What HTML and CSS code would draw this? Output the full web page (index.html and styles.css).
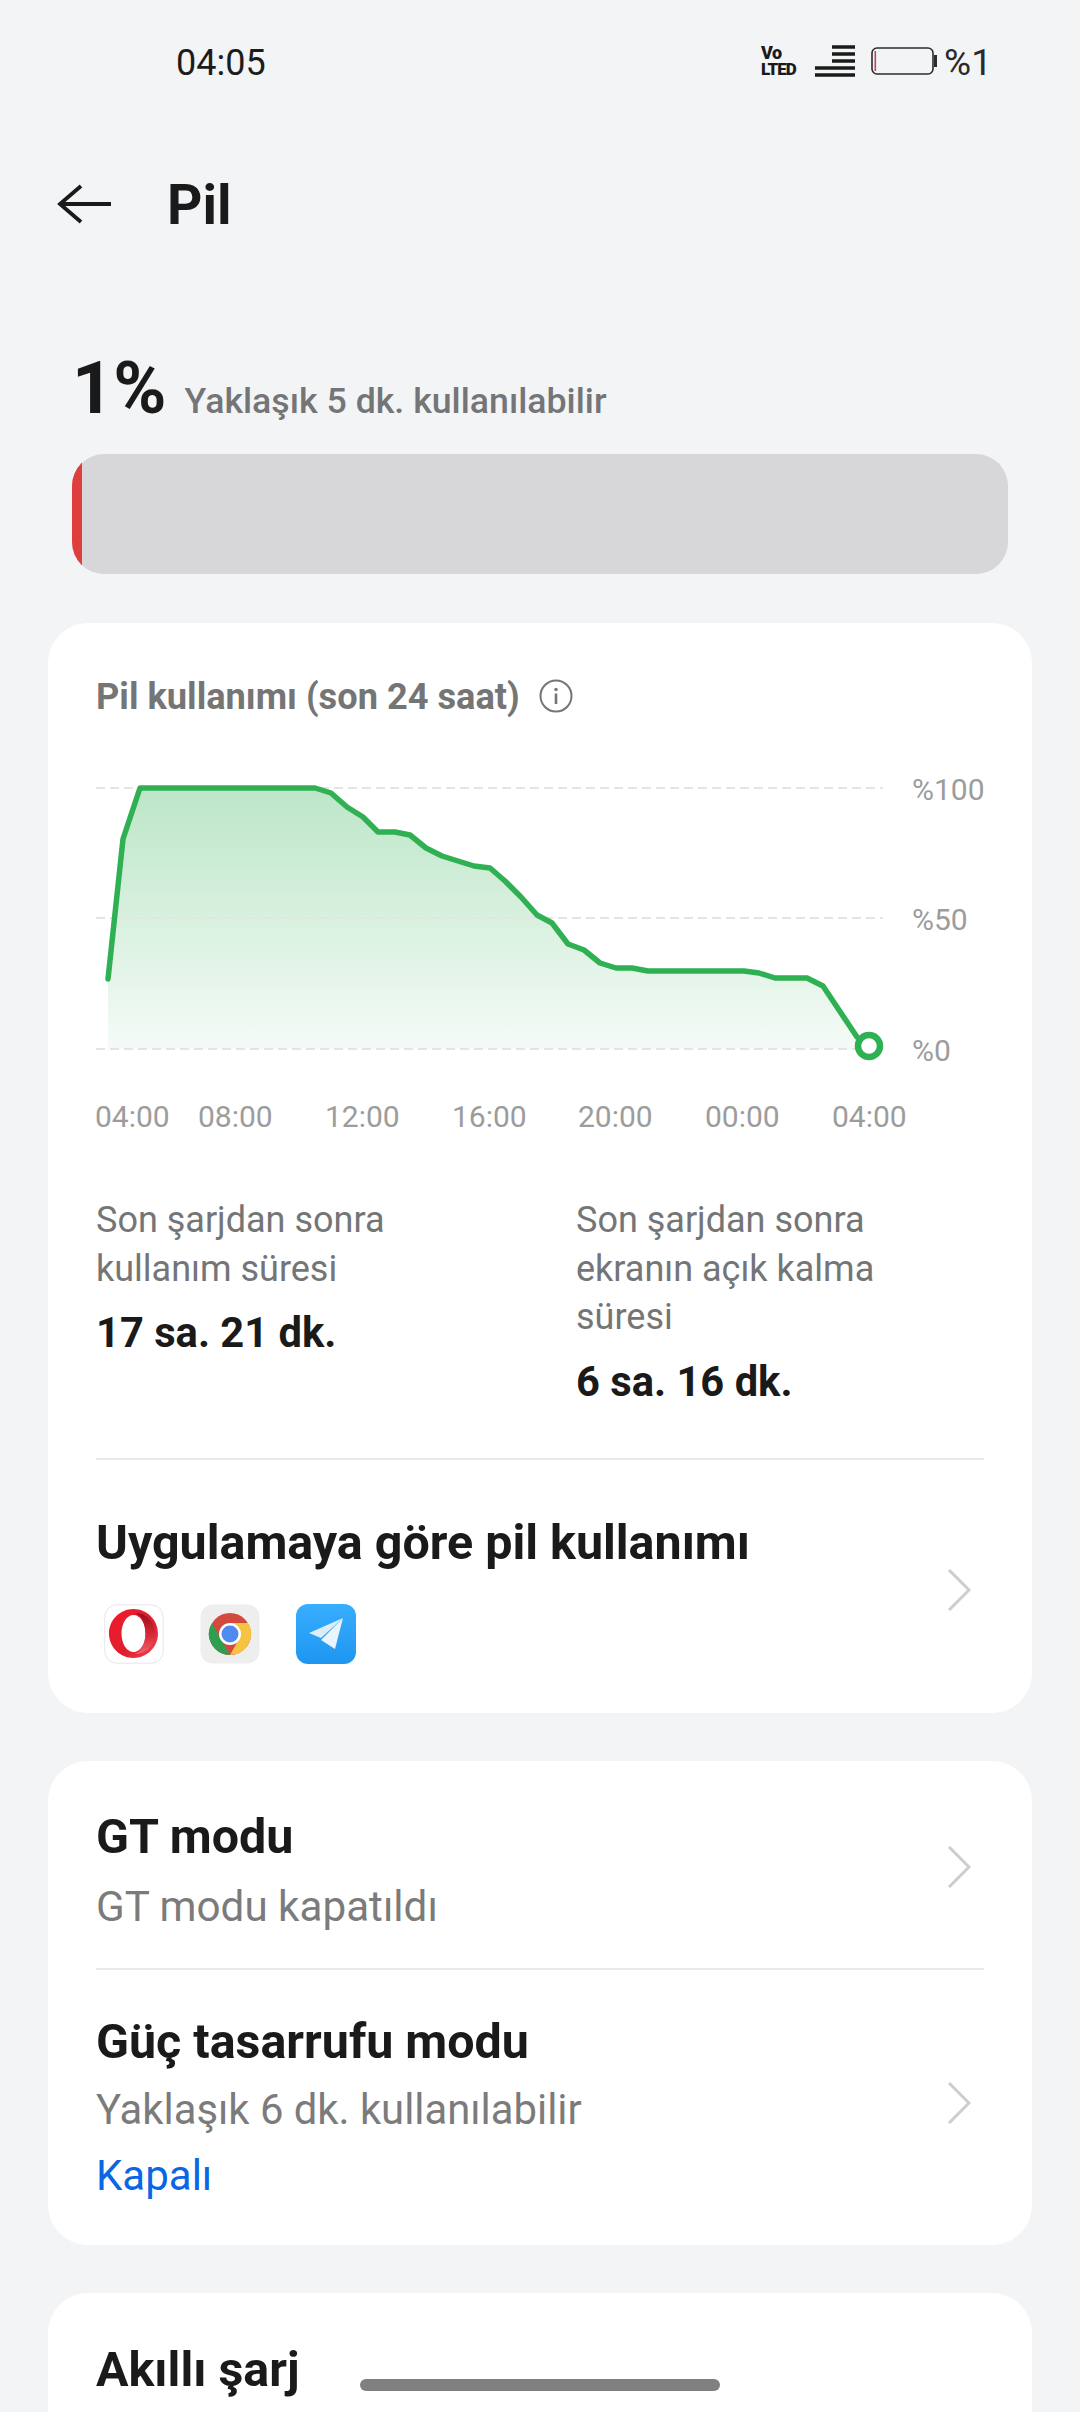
FILE: index.html
```html
<!DOCTYPE html>
<html lang="tr">
<head>
<meta charset="utf-8">
<title>Pil</title>
<link rel="stylesheet" href="styles.css">
</head>
<body>
<div class="page">
  <header class="status">
    <span class="clock">04:05</span>
    <div class="status-right">
      <div class="volte">
        <span class="volte-a">Vo</span>
        <span class="volte-b">LTED</span>
      </div>
      <svg class="signal" width="42" height="32" viewBox="0 0 42 32">
        <path d="M18 2H41M18 9H41M18 16H41M1 23H41M1 30H41" stroke="#1a1a1a" stroke-width="3.400" fill="none"/>
      </svg>
      <svg class="batt" width="67" height="30" viewBox="0 0 67 30">
        <rect x="1" y="1" width="61" height="26" rx="5" fill="none" stroke="#2b2b2b" stroke-width="1.600"/>
        <rect x="3.500" y="4" width="1.600" height="20" fill="#c0455a"/>
        <rect x="63" y="8" width="3" height="12" fill="#2b2b2b"/>
      </svg>
      <span class="pct">%1</span>
    </div>
  </header>

  <div class="appbar">
    <svg class="back" width="56" height="40" viewBox="0 0 56 40">
      <path d="M55 20H4M25 2L4 20L25 38" fill="none" stroke="#1a1a1a" stroke-width="3.800"/>
    </svg>
    <h1 class="title">Pil</h1>
  </div>

  <section class="level">
    <div class="level-row">
      <span class="level-num">1%</span>
      <span class="level-sub">Yaklaşık 5 dk. kullanılabilir</span>
    </div>
    <div class="bar"><div class="bar-fill"></div></div>
  </section>

  <section class="card card-usage">
    <div class="usage-head">
      <span class="usage-title">Pil kullanımı (son 24 saat)</span>
      <svg width="34" height="34" viewBox="0 0 34 34">
        <circle cx="17" cy="17" r="15.500" fill="none" stroke="#757575" stroke-width="2"/>
        <path d="M17 14.500V25" stroke="#757575" stroke-width="2.600"/>
        <circle cx="17" cy="10.500" r="1.700" fill="#757575"/>
      </svg>
    </div>

    <svg class="chart" width="984" height="380" viewBox="48 760 984 380">
      <defs>
        <linearGradient id="area" x1="0" y1="0" x2="0" y2="1">
          <stop offset="0" stop-color="#2fb052" stop-opacity=".32"/>
          <stop offset="1" stop-color="#2fb052" stop-opacity=".05"/>
        </linearGradient>
      </defs>
      <path d="M108 979L123 839L140 788L315 788L331 793L347 807L363 817L378 832L395 832L410 835L426 848L442 856L458 861L474 866L490 868L505 881L521 897L537 915L552 923L568 944L584 950L600 963L616 968L632 968L648 971L744 971L759 973L775 978L807 978L823 986L857 1037L869 1049L108 1049Z" fill="url(#area)"/>
      <path class="grid" d="M96 788H883M96 918H883M96 1049H883"/>
      <path class="line" d="M108 979L123 839L140 788L315 788L331 793L347 807L363 817L378 832L395 832L410 835L426 848L442 856L458 861L474 866L490 868L505 881L521 897L537 915L552 923L568 944L584 950L600 963L616 968L632 968L648 971L744 971L759 973L775 978L807 978L823 986L857 1037"/>
      <circle class="dot" cx="869" cy="1046" r="11"/>
      <text class="axis" x="912" y="800">%100</text>
      <text class="axis" x="912" y="930">%50</text>
      <text class="axis" x="912" y="1061">%0</text>
      <text class="axis" x="95" y="1127">04:00</text>
      <text class="axis" x="198" y="1127">08:00</text>
      <text class="axis" x="325" y="1127">12:00</text>
      <text class="axis" x="452" y="1127">16:00</text>
      <text class="axis" x="578" y="1127">20:00</text>
      <text class="axis" x="705" y="1127">00:00</text>
      <text class="axis" x="832" y="1127">04:00</text>
    </svg>

    <div class="stats">
      <div class="stat">
        <p class="stat-label">Son şarjdan sonra kullanım süresi</p>
        <p class="stat-value">17 sa. 21 dk.</p>
      </div>
      <div class="stat">
        <p class="stat-label">Son şarjdan sonra ekranın açık kalma süresi</p>
        <p class="stat-value">6 sa. 16 dk.</p>
      </div>
    </div>

    <div class="divider"></div>

    <div class="row row-apps">
      <div class="row-main">
        <div class="row-title">Uygulamaya göre pil kullanımı</div>
        <div class="apps">
          <svg class="app" width="60" height="60" viewBox="0 0 60 60">
            <defs>
              <linearGradient id="op" x1="0" y1="0" x2="1" y2="1">
                <stop offset="0" stop-color="#f01a2a"/>
                <stop offset=".6" stop-color="#de1f2e"/>
                <stop offset="1" stop-color="#ef4a55"/>
              </linearGradient>
              <linearGradient id="ops" x1="0" y1="0" x2="0" y2="1">
                <stop offset="0" stop-color="#9c0e1a"/>
                <stop offset=".55" stop-color="#d92a38"/>
                <stop offset="1" stop-color="#f0626c"/>
              </linearGradient>
            </defs>
            <rect x=".8" y=".8" width="58.400" height="58.400" rx="12" fill="#fff" stroke="#e6e6e6" stroke-width="1"/>
            <path fill-rule="evenodd" d="M29.500 5C43 5 54 16 54 29.500S43 54 29.500 54S5 43 5 29.500S16 5 29.500 5ZM29.500 11C23 11 17.500 19 17.500 29.500S23 48 29.500 48S41.500 40 41.500 29.500S36 11 29.500 11Z" fill="url(#op)"/>
            <path d="M31 9C37 11 41.500 19 41.500 29.500S37 48 31 50C43 50 51 41 51 29.500S43 9 31 9Z" fill="url(#ops)"/>
          </svg>
          <svg class="app" width="60" height="60" viewBox="0 0 60 60">
            <rect x=".5" y=".5" width="59" height="59" rx="12" fill="#eeeeee"/>
            <circle cx="30" cy="30" r="21" fill="#d24a3d"/>
            <path d="M12 19L22 37L30 51A21 21 0 0 1 12 19Z" fill="#2f9e4f"/>
            <path d="M30 19H48A21 21 0 0 1 30 51L39 35Z" fill="#f6c342"/>
            <circle cx="30" cy="30" r="11" fill="#fff"/>
            <circle cx="30" cy="30" r="8.500" fill="#4f8bee"/>
          </svg>
          <svg class="app" width="60" height="60" viewBox="0 0 60 60">
            <defs>
              <linearGradient id="tg" x1="0" y1="0" x2="0" y2="1">
                <stop offset="0" stop-color="#37aefe"/>
                <stop offset="1" stop-color="#1e96f0"/>
              </linearGradient>
            </defs>
            <rect width="60" height="60" rx="12" fill="url(#tg)"/>
            <path d="M47 14L13 29L25 34Z" fill="#dcecfb"/>
            <path d="M47 14L25 36L39 45Z" fill="#eaf4fd"/>
          </svg>
        </div>
      </div>
      <svg class="chev" width="24" height="42" viewBox="0 0 24 42"><path d="M2 1L22 21L2 41" fill="none" stroke="#cdcdcd" stroke-width="3"/></svg>
    </div>
  </section>

  <section class="card card-modes">
    <div class="row row-gt">
      <div class="row-main">
        <div class="row-title">GT modu</div>
        <div class="row-sub">GT modu kapatıldı</div>
      </div>
      <svg class="chev" width="24" height="42" viewBox="0 0 24 42"><path d="M2 1L22 21L2 41" fill="none" stroke="#cdcdcd" stroke-width="3"/></svg>
    </div>
    <div class="divider"></div>
    <div class="row row-save">
      <div class="row-main">
        <div class="row-title">Güç tasarrufu modu</div>
        <div class="row-sub">Yaklaşık 6 dk. kullanılabilir</div>
        <div class="row-link">Kapalı</div>
      </div>
      <svg class="chev" width="24" height="42" viewBox="0 0 24 42"><path d="M2 1L22 21L2 41" fill="none" stroke="#cdcdcd" stroke-width="3"/></svg>
    </div>
  </section>

  <section class="card card-last">
    <div class="row-title">Akıllı şarj</div>
  </section>

  <div class="home"></div>
</div>
</body>
</html>
```

FILE: styles.css
```css
* { box-sizing: border-box; }
html, body { margin: 0; padding: 0; }
body { background: #f3f4f6; font-family: Roboto, "Noto Sans", sans-serif; color: #1a1a1a; }
p, h1 { margin: 0; }
.page { position: relative; width: 1080px; height: 2412px; overflow: hidden; }

.status { height: 124px; padding: 41px 88px 0 176px; display: flex; justify-content: space-between; align-items: flex-start; }
.clock { font-size: 36px; line-height: 44px; color: #1c1c1c; }
.status-right { display: flex; align-items: flex-start; height: 44px; }
.volte { width: 37px; margin-top: 3px; display: flex; flex-direction: column; font-weight: 900; color: #1a1a1a; white-space: nowrap; }
.volte-a { font-size: 18px; line-height: 17px; letter-spacing: -.6px; }
.volte-b { font-size: 17px; line-height: 17px; letter-spacing: -1px; }
.signal { margin: 4px 0 0 16px; }
.batt { margin: 6px 0 0 15px; }
.pct { font-size: 37px; line-height: 44px; margin-left: 6px; color: #2a2a2a; }

.appbar { height: 160px; display: flex; align-items: flex-start; padding: 60px 0 0 56px; }
.back { flex: none; }
.title { font-size: 55px; line-height: 60px; font-weight: 700; margin: -9px 0 0 55px; color: #1a1a1a; }

.level { padding: 0 72px; height: 339px; }
.level-row { display: flex; align-items: baseline; height: 170px; padding-top: 58px; gap: 18px; }
.level-num { font-size: 72px; line-height: 94px; font-weight: 700; color: #1a1a1a; }
.level-sub { font-size: 35.700px; font-weight: 500; color: #747577; }
.bar { height: 120px; background: #d7d7d9; border-radius: 32px; overflow: hidden; }
.bar-fill { width: 10px; height: 100%; background: #de3f3c; }

.card { margin: 0 48px 48px; background: #fff; border-radius: 40px; padding: 0 48px; }
.card-usage { height: 1090px; }
.usage-head { display: flex; align-items: center; gap: 19px; height: 146px; }
.usage-title { font-size: 36.200px; font-weight: 700; color: #757575; }
.chart { display: block; margin: -9px -48px 0; }
.grid { fill: none; stroke: #e4e4e4; stroke-width: 2; stroke-dasharray: 9 5; }
.line { fill: none; stroke: #2fb052; stroke-width: 5.500; stroke-linejoin: round; stroke-linecap: round; }
.dot { fill: #fff; stroke: #2fb052; stroke-width: 6.500; }
.axis { font-size: 30px; fill: #9c9c9c; font-family: Roboto, sans-serif; }

.stats { display: grid; grid-template-columns: 480px 1fr; height: 262px; margin-top: 56px; }
.stat-label { font-size: 36px; line-height: 48.500px; color: #747577; max-width: 330px; }
.stat-value { font-size: 41.700px; font-weight: 700; line-height: 80px; color: #1a1a1a; }

.divider { height: 2px; background: #e8e8e8; }

.row { display: flex; align-items: center; justify-content: space-between; }
.row-main { flex: 1; }
.row-title { font-size: 48.400px; font-weight: 700; line-height: 56px; color: #1a1a1a; }
.row-sub { font-size: 41.800px; line-height: 56px; color: #7b7b7b; margin-top: 12px; }
.row-link { font-size: 42px; line-height: 56px; color: #0b66e4; margin-top: 10px; }
.chev { flex: none; margin-right: 13px; }
.row-apps { padding-top: 55px; }
.apps { display: flex; gap: 36px; margin: 33px 0 0 8px; }
.app { flex: none; }
.card-modes { height: 484px; }
.row-gt { padding-top: 48px; height: 207px; align-items: flex-start; }
.row-gt .row-sub { margin-top: 14px; font-size: 42.200px; }
.row-gt .chev { margin-top: 37px; }
.row-save { padding-top: 44px; }
.row-save .chev { margin-bottom: 12px; }
.card-last { padding-top: 49px; height: 200px; }

.home { position: absolute; left: 360px; top: 2379px; width: 360px; height: 12px; background: #808080; border-radius: 6px; }
```
